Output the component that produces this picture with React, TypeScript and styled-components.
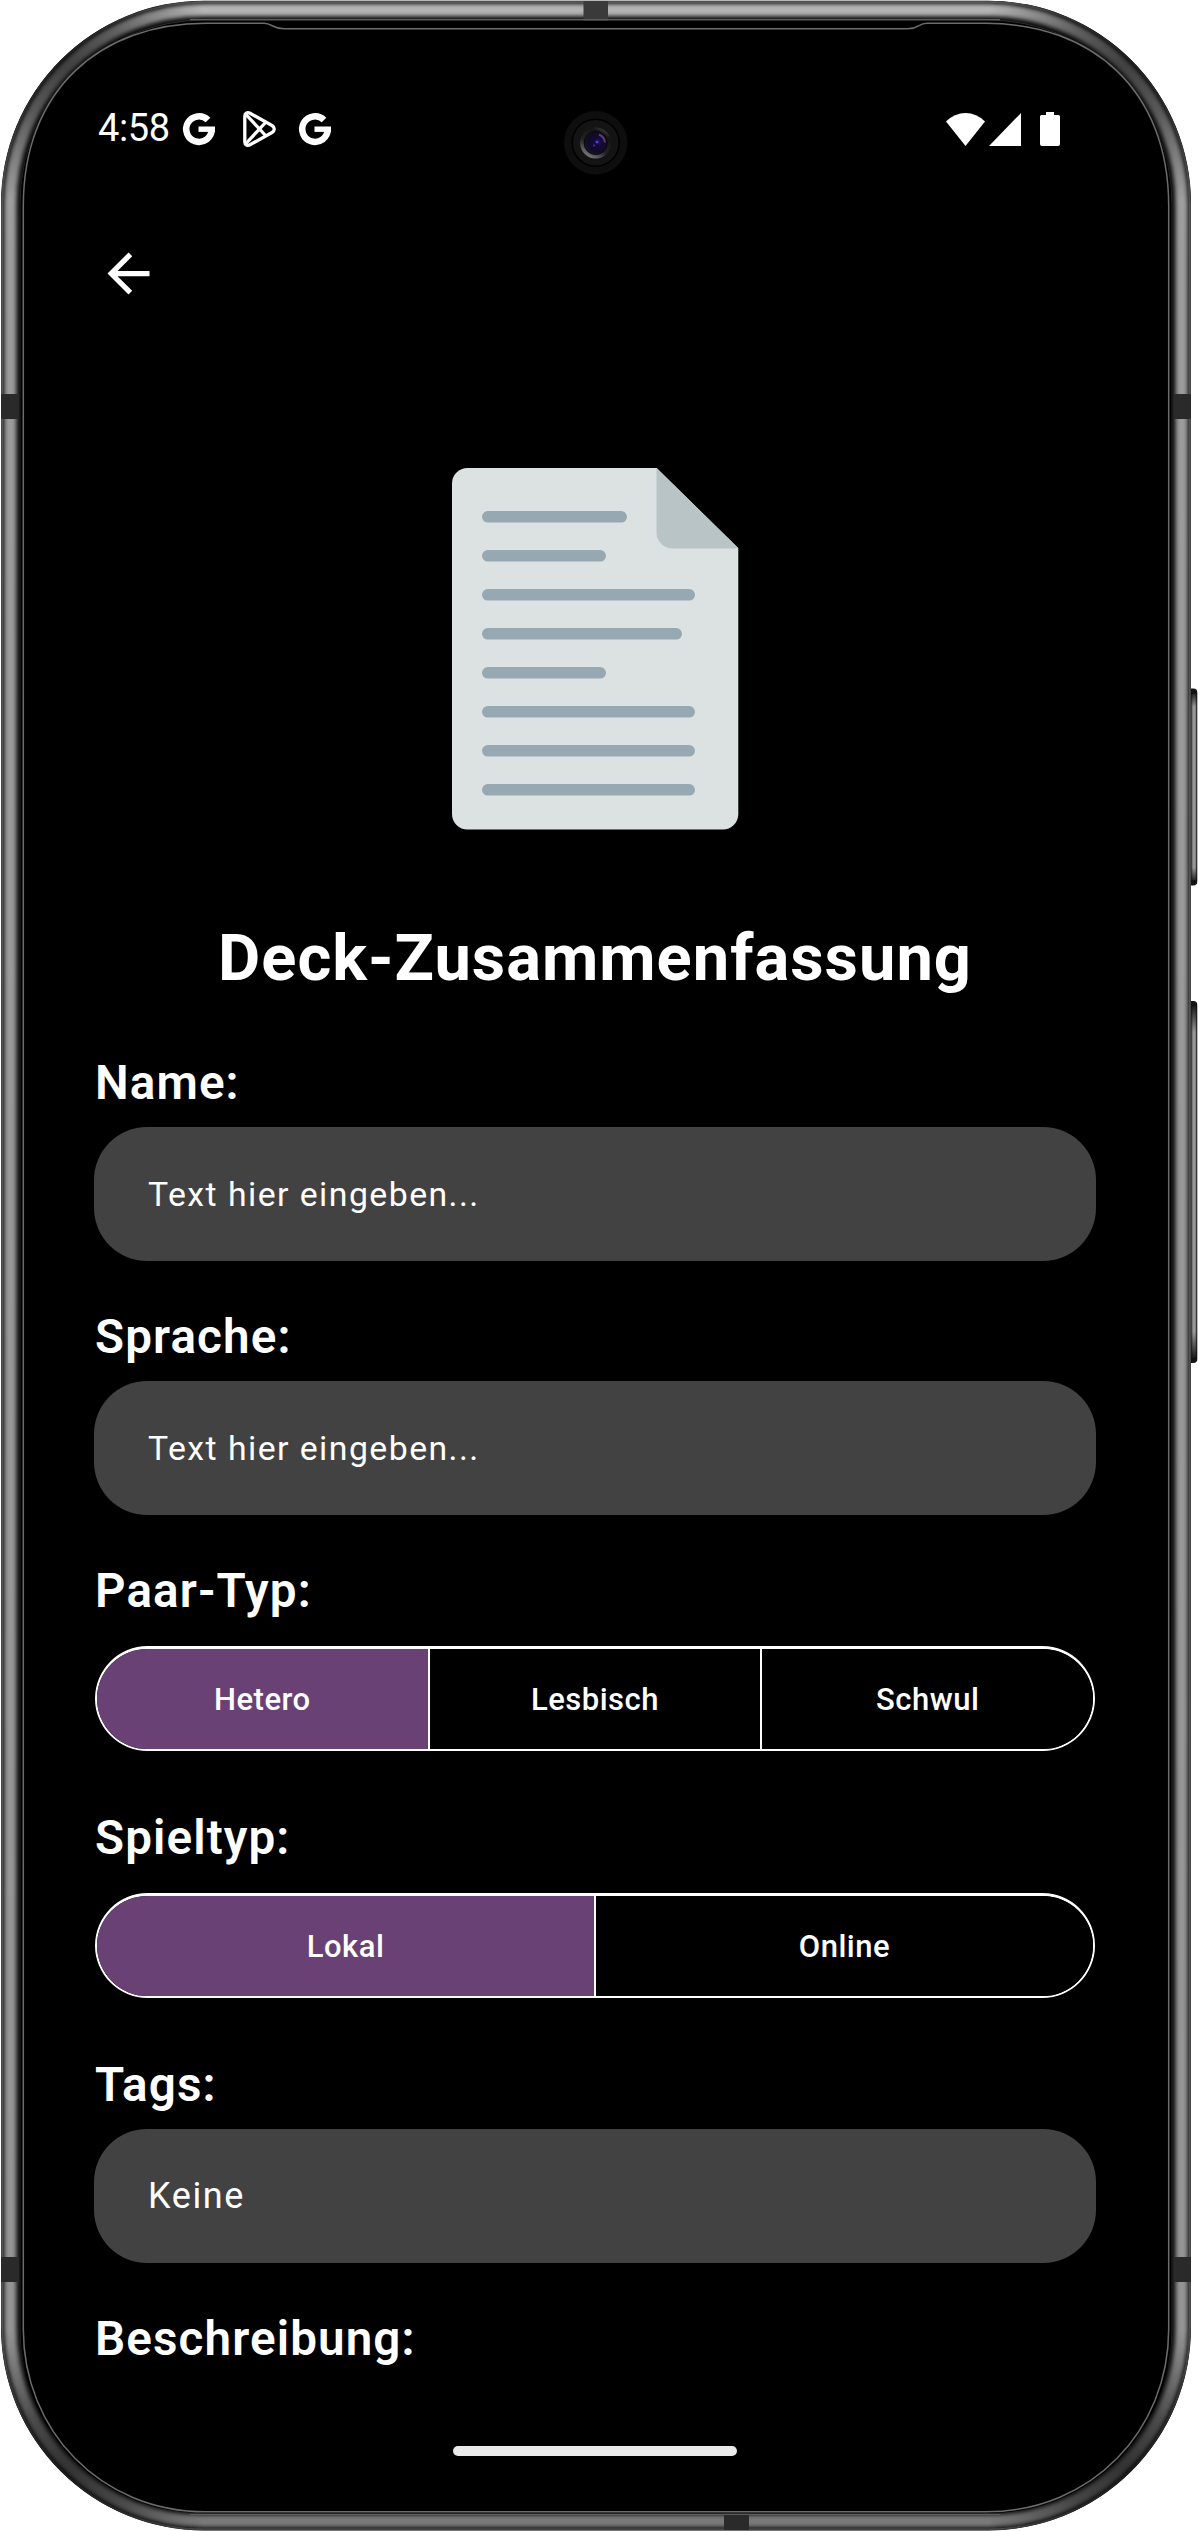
import React from 'react';
import styled, { createGlobalStyle } from 'styled-components';

const GlobalStyle = createGlobalStyle`
  *, *::before, *::after { box-sizing: border-box; }
  html, body { margin: 0; padding: 0; background: #fff; }
  body { font-family: Roboto, "Noto Sans", sans-serif; color: #fff; }
`;

const Page = styled.div`
  position: relative;
  width: 1198px;
  height: 2531px;
  overflow: hidden;
  background: #fff;
`;

const FrameArt = styled.svg`
  position: absolute;
  inset: 0;
  width: 1198px;
  height: 2531px;
  display: block;
`;

const Screen = styled.main`
  position: relative;
  display: flex;
  flex-direction: column;
  width: 1191px;
  height: 2531px;
  padding: 104px 95px 0 94px;
`;

const StatusBar = styled.header`
  display: flex;
  justify-content: space-between;
  align-items: center;
  height: 50px;
  padding: 0 36px 0 4px;
`;

const StatusGroup = styled.div`
  display: flex;
  align-items: center;
`;

const Clock = styled.span`
  width: 85px;
  padding-bottom: 2px;
  font-size: 38px;
  line-height: 48px;
  letter-spacing: -0.4px;
  white-space: nowrap;
`;

const Glyph = styled.svg<{ $w: number; $h: number; $gap?: number }>`
  display: block;
  flex: none;
  width: ${(p) => p.$w}px;
  height: ${(p) => p.$h}px;
  margin-left: ${(p) => p.$gap ?? 0}px;
  overflow: visible;
`;

const BackButton = styled.button`
  display: flex;
  width: 63px;
  height: 63px;
  margin: 88px 0 0 3px;
  padding: 0;
  border: 0;
  background: none;
  color: #fff;
`;

const Hero = styled.div`
  display: flex;
  justify-content: center;
  margin-top: 163px;
  height: 362px;
  padding-left: 1px;
`;

const Title = styled.h1`
  margin: 90px 0 0;
  font-size: 65px;
  font-weight: 700;
  line-height: 76px;
  letter-spacing: 1px;
  text-align: center;
  white-space: nowrap;
`;

const Form = styled.form`
  display: flex;
  flex-direction: column;
  gap: 47px;
  margin-top: 58px;
`;

const Field = styled.div`
  display: flex;
  flex-direction: column;
  gap: 15px;
`;

const Label = styled.label`
  padding-left: 1px;
  font-size: 47.6px;
  font-weight: 600;
  line-height: 58px;
  letter-spacing: 1.1px;
  white-space: nowrap;
`;

const InputBox = styled.div<{ $filled?: boolean }>`
  display: flex;
  align-items: center;
  height: 134px;
  padding: ${(p) => (p.$filled ? 0 : 1)}px 54px 0;
  border-radius: 53px;
  background: #424242;
  font-size: ${(p) => (p.$filled ? 36 : 33.8)}px;
  line-height: 44px;
  letter-spacing: ${(p) => (p.$filled ? 1.6 : 1.45)}px;
  white-space: nowrap;
`;

const Segments = styled.div`
  display: flex;
  height: 105px;
  margin: 11px 1px;
  border: solid #fff;
  border-width: 3px 2px 2px;
  border-radius: 53px;
  overflow: hidden;
`;

const Segment = styled.button<{ $active?: boolean }>`
  flex: 1 1 0;
  padding: 2px 0 0;
  border: 0;
  color: #fff;
  background: ${(p) => (p.$active ? '#6a4175' : '#000')};
  font: 500 31px/40px Roboto, "Noto Sans", sans-serif;
  letter-spacing: 0.5px;
  & + & { border-left: 2px solid #fff; }
`;

const HomeBar = styled.div`
  flex: none;
  width: 284px;
  height: 10px;
  margin: 78px auto 0;
  border-radius: 5px;
  background: #eaeaea;
`;

const rows = [
  [482, 627, 511], [482, 606, 550], [482, 695, 589], [482, 682, 628],
  [482, 606, 667], [482, 695, 706], [482, 695, 745], [482, 695, 784],
];

const DocumentArt = () => (
  <Glyph $w={287} $h={362} viewBox="452 468 287 362">
    <path d="M467.500 468H656.700L738.300 548V814a15.500 15.500 0 0 1-15.500 15.500H467.500A15.500 15.500 0 0 1 452 814V483.500A15.500 15.500 0 0 1 467.500 468z" fill="#dce2e2" />
    <path d="M656.500 468L738.300 548.500H672.500a16 16 0 0 1-16-16z" fill="#b9c4c7" />
    {rows.map(([x1, x2, y]) => (
      <rect key={y} x={x1} y={y} width={x2 - x1} height={11.6} rx={5.8} fill="#96a8b2" />
    ))}
  </Glyph>
);

const GoogleMark = ({ gap = 0 }: { gap?: number }) => (
  <Glyph $w={32} $h={32} $gap={gap} viewBox="0 0 32 32">
    <path d="M25 7A12.800 12.800 0 1 0 28.800 16.300" fill="none" stroke="#fff" strokeWidth="6.500" />
    <rect x="15.500" y="13.500" width="16.500" height="5.400" fill="#fff" />
  </Glyph>
);

const PlayMark = () => (
  <Glyph $w={33} $h={36} $gap={28} viewBox="0 0 33 36">
    <g fill="none" stroke="#fff" strokeWidth="3.300" strokeLinejoin="round">
      <path d="M1.800 5C1.800 2 4.500 .8 7 2.200L29 14.500C32 16.300 32 19.700 29 21.500L7 33.800C4.500 35.200 1.800 34 1.800 31z" />
      <path d="M3 3.500L22.500 24.500M3 32.500L22.500 11.500" />
    </g>
  </Glyph>
);

const FRAME = { x: 1, y: 0.7, width: 1190, height: 2529.8 };
const ring = (inset: number, r = 203) => ({
  x: FRAME.x + inset,
  y: FRAME.y + inset,
  width: FRAME.width - inset * 2,
  height: FRAME.height - inset * 2,
  rx: r - inset,
  fill: 'none',
});

const corners: [number, number][] = [[62, 60], [1130, 60], [62, 2471], [1130, 2471]];

const PhoneFrame = () => (
  <FrameArt viewBox="0 0 1198 2531">
    <defs>
      <linearGradient id="metal" x1="0" y1="0" x2="0" y2="2531" gradientUnits="userSpaceOnUse">
        <stop offset="0" stopColor="#b8b8b8" />
        <stop offset=".02" stopColor="#a6a6a6" />
        <stop offset=".1" stopColor="#9c9c9c" />
        <stop offset=".93" stopColor="#949494" />
        <stop offset="1" stopColor="#787878" />
      </linearGradient>
      <radialGradient id="shade">
        <stop offset="0" stopColor="#000" stopOpacity=".62" />
        <stop offset=".4" stopColor="#000" stopOpacity=".45" />
        <stop offset="1" stopColor="#000" stopOpacity="0" />
      </radialGradient>
      <linearGradient id="key" x1="0" x2="1">
        <stop offset="0" stopColor="#2a2a2a" />
        <stop offset=".35" stopColor="#999" />
        <stop offset=".7" stopColor="#999" />
        <stop offset="1" stopColor="#111" />
      </linearGradient>
      <linearGradient id="keyEnds" x1="0" y1="0" x2="0" y2="1">
        <stop offset="0" stopColor="#111" />
        <stop offset=".08" stopColor="#111" stopOpacity="0" />
        <stop offset=".92" stopColor="#111" stopOpacity="0" />
        <stop offset="1" stopColor="#111" />
      </linearGradient>
      <radialGradient id="lens" cx=".58" cy=".45" r=".62">
        <stop offset="0" stopColor="#2a1880" />
        <stop offset=".25" stopColor="#140a3a" />
        <stop offset=".7" stopColor="#130a26" />
        <stop offset="1" stopColor="#10222c" />
      </radialGradient>
      <linearGradient id="lensRim" x1=".2" y1="1" x2=".8" y2="0">
        <stop offset="0" stopColor="#8a8a8a" />
        <stop offset=".4" stopColor="#222" />
        <stop offset=".8" stopColor="#151515" />
        <stop offset="1" stopColor="#4a4a4a" />
      </linearGradient>
      <filter id="soft" x="0" y="0" width="1198" height="2531" filterUnits="userSpaceOnUse">
        <feGaussianBlur stdDeviation="1.900" />
      </filter>
      <clipPath id="body">
        <rect {...ring(0)} />
      </clipPath>
    </defs>

    {[[688.5, 197], [1001, 362]].map(([y, h]) => (
      <g key={y}>
        <rect x={1186} y={y} width={11.3} height={h} rx={4} fill="#151515" />
        <rect x={1191} y={y + 5} width={6} height={h - 10} rx={2} fill="url(#key)" />
        <rect x={1191} y={y + 3} width={6} height={h - 6} rx={2} fill="url(#keyEnds)" />
      </g>
    ))}

    <rect {...ring(0)} fill="#0a0a0a" />
    <g clipPath="url(#body)">
      <rect {...ring(1)} stroke="#3c3e3c" strokeWidth={2} />
      <rect {...ring(9.3)} stroke="url(#metal)" strokeWidth={12.3} filter="url(#soft)" />
      {corners.map(([cx, cy]) => (
        <circle key={`${cx}-${cy}`} cx={cx} cy={cy} r={150} fill="url(#shade)" />
      ))}
      <g fill="#2a2a2a">
        <rect x={583.5} y={1} width={24.5} height={20} fill="#3a3a3a" />
        <rect x={724} y={2513} width={25} height={17} />
        <rect x={1} y={394} width={18} height={25} />
        <rect x={1174} y={394} width={17} height={25} />
        <rect x={1} y={2257} width={18} height={25} />
        <rect x={1174} y={2257} width={17} height={25} />
      </g>
    </g>
    <rect {...ring(19.3)} stroke="#2c2c2c" strokeWidth={1} />
    <path d="M190 19.700H1000M190 2514.500H1000" stroke="#5c5c5c" strokeWidth={1.2} />
    <rect x={20.5} y={21} width={1151} height={2492} rx={182} fill="#000" />
    <path
      d="M23.300 206C23.300 90 100 23.300 206 23.300H264C272 23.300 273 28.800 284 28.800H908C919 28.800 918 23.300 927 23.300H986C1092 23.300 1168.700 90 1168.700 206V2329C1168.700 2430 1092 2511.800 986 2511.800H206C100 2511.800 23.300 2430 23.300 2329z"
      fill="#000"
      stroke="#6c6c6c"
      strokeWidth={1.5}
    />

    <circle cx={595.7} cy={142.7} r={31.7} fill="#0e0e0e" />
    <circle cx={595.7} cy={142.7} r={23.5} fill="#141414" stroke="#000" strokeWidth={1.5} />
    <circle cx={595.7} cy={143} r={15.5} fill="url(#lensRim)" />
    <circle cx={595.7} cy={143} r={11.5} fill="url(#lens)" stroke="#060608" strokeWidth={1} />
    <path d="M599 134.500Q604.500 137 605 142.500" stroke="#9b62a8" strokeWidth={2} fill="none" opacity={0.55} />
    <circle cx={597} cy={142} r={1.3} fill="#5b3fe0" />
    <circle cx={594} cy={145.5} r={1.1} fill="#3a30b0" />
  </FrameArt>
);

const App = () => (
  <>
    <GlobalStyle />
    <Page>
      <PhoneFrame />
      <Screen>
        <StatusBar>
          <StatusGroup>
            <Clock>4:58</Clock>
            <GoogleMark />
            <PlayMark />
            <GoogleMark gap={23} />
          </StatusGroup>
          <StatusGroup>
            <Glyph $w={39} $h={33} viewBox="0 0 39 33">
              <path d="M0 8.500Q8.500 0 19.500 0T39 8.500L19.500 33z" fill="#fff" />
            </Glyph>
            <Glyph $w={32} $h={33} $gap={4} viewBox="0 0 32 33">
              <path d="M32 0V33H0z" fill="#fff" />
            </Glyph>
            <Glyph $w={20} $h={34} $gap={19} viewBox="0 0 20 34">
              <path d="M6 0H14V3H18.500A1.500 1.500 0 0 1 20 4.500V32A2 2 0 0 1 18 34H2A2 2 0 0 1 0 32V4.500A1.500 1.500 0 0 1 1.500 3H6z" fill="#fff" />
            </Glyph>
          </StatusGroup>
        </StatusBar>

        <BackButton aria-label="Zurück">
          <Glyph $w={63} $h={63} viewBox="0 0 24 24">
            <path d="M20 11H7.830l5.590-5.590L12 4l-8 8 8 8 1.410-1.410L7.830 13H20v-2z" fill="#fff" />
          </Glyph>
        </BackButton>

        <Hero>
          <DocumentArt />
        </Hero>
        <Title>Deck-Zusammenfassung</Title>

        <Form>
          <Field>
            <Label>Name:</Label>
            <InputBox>Text hier eingeben...</InputBox>
          </Field>
          <Field>
            <Label>Sprache:</Label>
            <InputBox>Text hier eingeben...</InputBox>
          </Field>
          <Field>
            <Label>Paar-Typ:</Label>
            <Segments>
              <Segment type="button" $active>Hetero</Segment>
              <Segment type="button">Lesbisch</Segment>
              <Segment type="button">Schwul</Segment>
            </Segments>
          </Field>
          <Field>
            <Label>Spieltyp:</Label>
            <Segments>
              <Segment type="button" $active>Lokal</Segment>
              <Segment type="button">Online</Segment>
            </Segments>
          </Field>
          <Field>
            <Label>Tags:</Label>
            <InputBox $filled>Keine</InputBox>
          </Field>
          <Field>
            <Label>Beschreibung:</Label>
          </Field>
        </Form>
        <HomeBar />
      </Screen>
    </Page>
  </>
);

export default App;
